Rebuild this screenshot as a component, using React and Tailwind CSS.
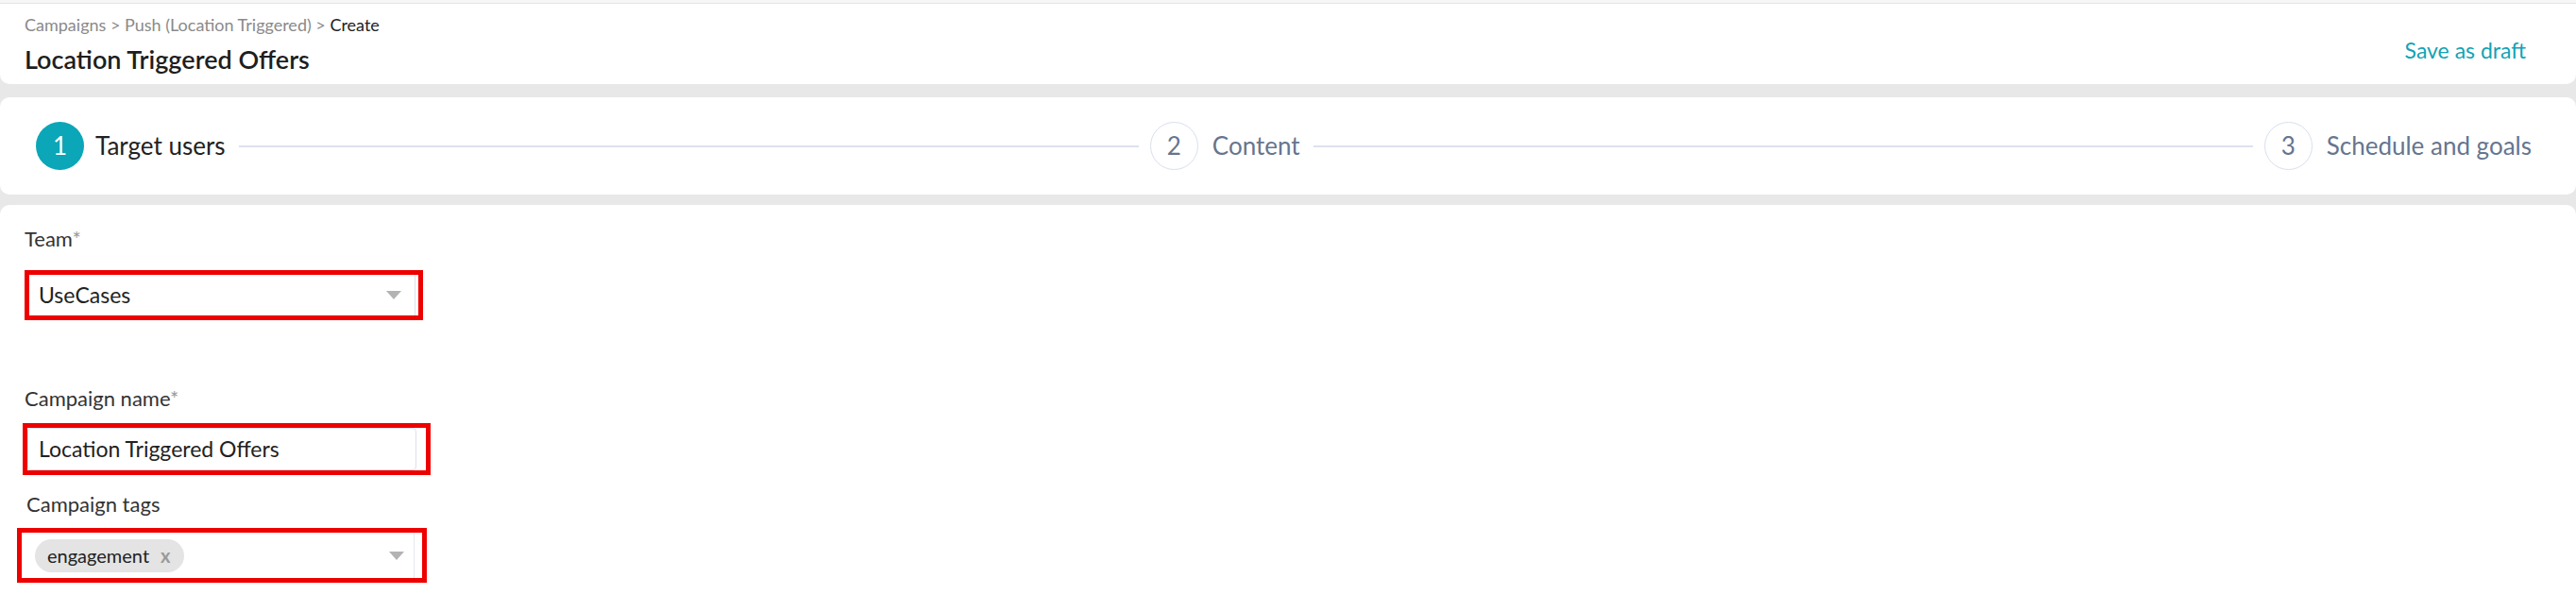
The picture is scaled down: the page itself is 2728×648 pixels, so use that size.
const steps = [
  { n: 1, label: "Target users", active: true },
  { n: 2, label: "Content" },
  { n: 3, label: "Schedule and goals" },
];

const Caret = () => (
  <svg width="16" height="9" viewBox="0 0 16 9" className="shrink-0">
    <path d="M0 0 L16 0 L8 9 Z" fill="#b3b3b3" />
  </svg>
);

const Step = ({ n, label, active }) => (
  <div className="flex items-center shrink-0">
    {active ? (
      <div className="w-[51px] h-[51px] rounded-full bg-[#0ba6b8] text-white flex items-center justify-center text-[26px]">
        {n}
      </div>
    ) : (
      <div className="w-[51px] h-[51px] rounded-full border border-[#d9dfec] text-[#66758f] flex items-center justify-center text-[26px]">
        {n}
      </div>
    )}
    <span
      className={
        active
          ? "ml-[12px] text-[26px] text-[#222]"
          : "ml-[15px] text-[26px] text-[#66758f]"
      }
    >
      {label}
    </span>
  </div>
);

export default function App() {
  return (
    <div className="min-h-screen bg-[#e8e8e8] font-['Lato',sans-serif] border-t-[3px] border-[#f6f6f6]">
      {/* header */}
      <div className="bg-white rounded-b-[10px] h-[86px] border-t border-[#e4e4e4] pl-[26px] pr-[53px] flex items-start justify-between">
        <div>
          <div className="mt-[8px] text-[18px] leading-[28px] text-[#8a8a8a]">
            Campaigns &gt; Push (Location Triggered) &gt;{" "}
            <span className="text-[#222]">Create</span>
          </div>
          <div className="mt-[5px] text-[27px] leading-[36px] font-semibold text-[#1e1e1e]">
            Location Triggered Offers
          </div>
        </div>
        <div className="mt-[34px] text-[23px] leading-[30px] text-[#12a3b5]">
          Save as draft
        </div>
      </div>

      {/* stepper */}
      <div className="mt-[14px] bg-white rounded-[10px] h-[103px] pl-[38px] pr-[47px] flex items-center">
        {steps.map((s, i) =>
          i < steps.length - 1 ? (
            <div key={s.n} className="flex items-center flex-1 basis-0">
              <Step {...s} />
              <div className="flex-1 h-[2px] bg-[#dde1ee] ml-[14px] mr-[12px]" />
            </div>
          ) : (
            <Step key={s.n} {...s} />
          )
        )}
      </div>

      {/* form */}
      <div className="mt-[11px] bg-white rounded-t-[10px] min-h-[431px] pt-[21px]">
        <div className="ml-[26px] text-[22px] leading-[30px] text-[#333]">
          Team<span className="text-[#999]">*</span>
        </div>
        <div className="mt-[18px] ml-[26px] w-[422px] h-[53px] border-[5px] border-[#e00] flex">
          <div className="flex-1 flex items-center justify-between pl-[10px] pr-[14px] border-r border-[#dde1ee]">
            <span className="text-[23px] text-[#222]">UseCases</span>
            <Caret />
          </div>
          <div className="w-[3px]" />
        </div>

        <div className="mt-[68px] ml-[26px] text-[22px] leading-[30px] text-[#333]">
          Campaign name<span className="text-[#999]">*</span>
        </div>
        <div className="mt-[11px] ml-[24px] w-[432px] h-[55px] border-[5px] border-[#e00] flex">
          <div className="flex-1 flex items-center pl-[11px] border border-[#dde1ee] rounded-[4px] mr-[10px]">
            <span className="text-[23px] text-[#222]">Location Triggered Offers</span>
          </div>
        </div>

        <div className="mt-[16px] ml-[28px] text-[22px] leading-[30px] text-[#333]">
          Campaign tags
        </div>
        <div className="mt-[10px] ml-[18px] w-[434px] h-[58px] border-[5px] border-[#e00] flex">
          <div className="flex-1 flex items-center justify-between pl-[14px] pr-[10px] border-r border-[#e6e8ef]">
            <div className="h-[35px] rounded-full bg-[#e4e4e4] flex items-center pl-[13px] pr-[14px]">
              <span className="text-[20px] text-[#222]">engagement</span>
              <span className="ml-[12px] text-[20px] font-bold text-[#9a9a9a] leading-none">x</span>
            </div>
            <Caret />
          </div>
          <div className="w-[8px]" />
        </div>
      </div>
    </div>
  );
}
